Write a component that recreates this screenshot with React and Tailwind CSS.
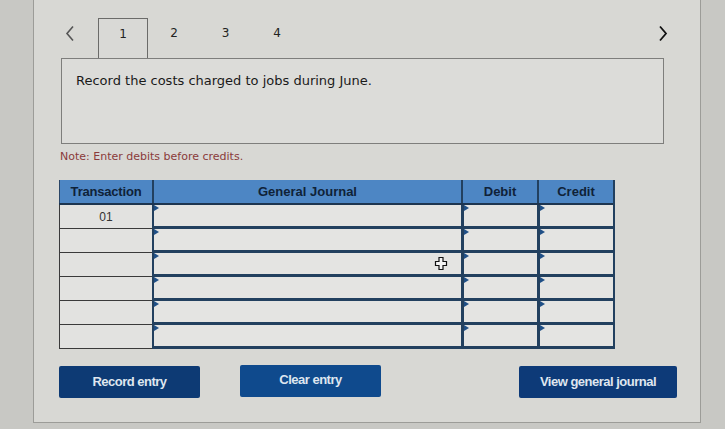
import React from "react";

const Tri = () => (
  <span className="absolute left-0 top-0 w-0 h-0 border-y-[3px] border-y-transparent border-l-[5px] border-l-[#1f4f86]" />
);

const ROWS = ["01", "", "", "", "", ""];

export default function App() {
  return (
    <div className="w-[725px] h-[429px] bg-[#c8c8c4] overflow-hidden relative" style={{ fontFamily: '"DejaVu Sans", Verdana, sans-serif' }}>
      <div className="ml-[33px] w-[668px] h-[423px] bg-[#d8d8d4] border-x border-b border-[#9c9c98] relative">
        {/* tabs row */}
        <div className="h-[58px] flex items-start relative">
          <div className="w-[63px] h-[40px] mt-[18px] flex items-start pl-[30px] pt-[7px]">
            <svg width="12" height="17" viewBox="0 0 12 17"><path d="M9 1.5 L3 8.5 L9 15.5" fill="none" stroke="#555" strokeWidth="1.6" /></svg>
          </div>
          <div className="mt-[18px] ml-[1px] flex">
            <div className="w-[50px] h-[40px] border border-b-0 border-[#6b6b69] bg-[#d9d9d6] flex items-center justify-center pb-[10px] text-[12px] text-[#222]">1</div>
            <div className="w-[52px] h-[40px] flex items-center justify-center pb-[10px] text-[12px] text-[#222]">2</div>
            <div className="w-[51px] h-[40px] flex items-center justify-center pb-[10px] text-[12px] text-[#222]">3</div>
            <div className="w-[52px] h-[40px] flex items-center justify-center pb-[10px] text-[12px] text-[#222]">4</div>
          </div>
          <div className="ml-auto mr-[32px] h-[40px] mt-[18px] flex items-start pt-[7px]">
            <svg width="10" height="17" viewBox="0 0 10 17"><path d="M2 1.5 L8 8.5 L2 15.5" fill="none" stroke="#111" strokeWidth="1.8" /></svg>
          </div>
        </div>
        {/* content box */}
        <div className="ml-[27px] w-[603px] h-[86px] border border-[#7e7e7c] bg-[#dcdcd9] pl-[14px] pt-[13px] text-[13px] leading-[18px] text-[#1a1a1a]">
          Record the costs charged to jobs during June.
        </div>
        <div className="ml-[26px] mt-[6px] text-[11px] leading-[14px] text-[#8a3b3b]">Note: Enter debits before credits.</div>
        {/* table */}
        <div className="ml-[25px] mt-[16px] w-[556px] border-r-2 border-[#22405f]" style={{ fontFamily: '"Liberation Sans", Arial, sans-serif' }}>
          <div className="flex h-[25px] bg-[#4d86c4] border-b-2 border-[#1d3550] text-[13px] font-bold text-[#0f2238]">
            <div className="w-[93px] border-l border-[#2a4566] flex items-center justify-center tracking-[-0.2px]">Transaction</div>
            <div className="w-[309px] border-l-2 border-[#22405f] flex items-center justify-center">General Journal</div>
            <div className="w-[76px] border-l-2 border-[#22405f] flex items-center justify-center">Debit</div>
            <div className="w-[76px] border-l-2 border-[#22405f] flex items-center justify-center">Credit</div>
          </div>
          {ROWS.map((t, i) => (
            <div key={i} className="flex h-[24px]">
              <div className="w-[93px] border-l border-b border-[#3a3a3a] bg-[#e2e2e0] flex items-center justify-center text-[12px] text-[#333]">{t}</div>
              <div className="w-[309px] relative border-l-2 border-b-[3px] border-[#22405f] bg-[#e4e4e2]"><Tri /></div>
              <div className="w-[76px] relative border-l-[3px] border-b-[3px] border-[#22405f] bg-[#e4e4e2]"><Tri /></div>
              <div className="w-[76px] relative border-l-[3px] border-b-[3px] border-[#22405f] bg-[#e4e4e2]"><Tri /></div>
            </div>
          ))}
        </div>
        {/* buttons */}
        <div className="flex items-start ml-[25px] mt-[16px] w-[618px] text-[13px] font-bold text-[#dfe6ef] tracking-[-0.5px]" style={{ fontFamily: '"Liberation Sans", Arial, sans-serif' }}>
          <div className="w-[141px] h-[32px] mt-[1px] bg-[#0d3a74] rounded-[2px] flex items-center justify-center">Record entry</div>
          <div className="w-[141px] h-[32px] ml-[40px] bg-[#0f4a8d] rounded-[2px] flex items-center justify-center pb-[2px]">Clear entry</div>
          <div className="w-[158px] h-[32px] mt-[1px] ml-auto bg-[#0d3a78] rounded-[2px] flex items-center justify-center">View general journal</div>
        </div>
      </div>
      {/* cursor */}
      <svg className="absolute left-[434px] top-[256px]" width="14" height="15" viewBox="0 0 14 15">
        <path d="M5 1.5 H9 V5.5 H12.5 V9.5 H9 V13.5 H5 V9.5 H1.5 V5.5 H5 Z" fill="#f4f4f4" stroke="#111" strokeWidth="1.2" />
      </svg>
    </div>
  );
}
